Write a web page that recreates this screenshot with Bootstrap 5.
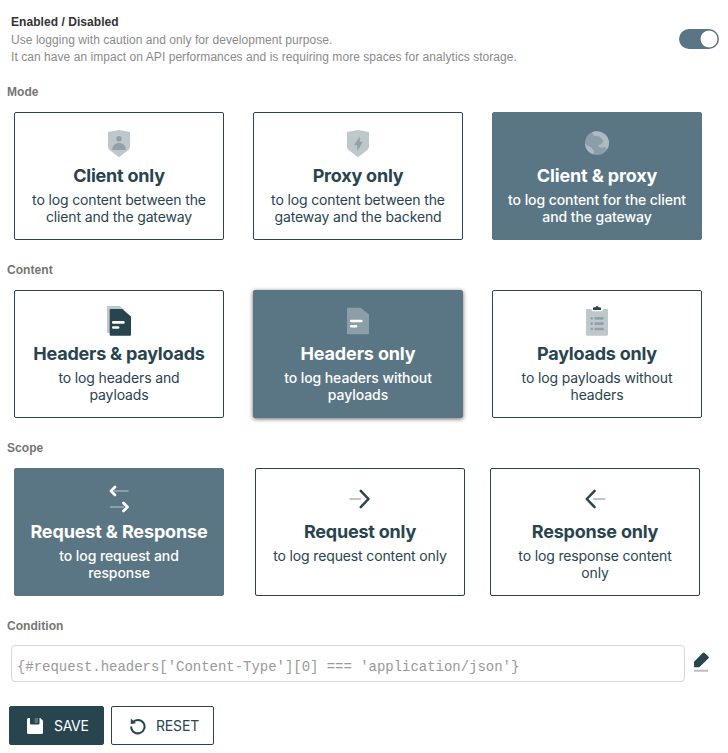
<!DOCTYPE html>
<html lang="en">
<head>
<meta charset="utf-8">
<meta name="viewport" content="width=device-width, initial-scale=1">
<title>Logging</title>
<link href="https://cdn.jsdelivr.net/npm/bootstrap@5.3.0/dist/css/bootstrap.min.css" rel="stylesheet">
<style>
  :root { --ink: #28444f; --slate: #5a7684; }
  body { font-family: "Liberation Sans", Arial, sans-serif; font-size: 12px; line-height: 17px; letter-spacing: .054px; color: #8a8a8a; height: 753px; overflow: hidden; }
  .intro { padding: 13px 9px 0 11px; height: 84px; }
  .intro-title { color: #333; line-height: 18px; margin-bottom: 1px; }
  .group-label { color: #757575; line-height: 17px; padding-left: 7px; margin-bottom: 11px; font-size: 12px; }
  .cond-label { margin-bottom: 10px; }
  .group-block { height: 178px; }
  .choices { padding-left: 14px; gap: 29px; }
  .choices-scope { gap: 31px; }
  .choices-scope .choice:last-child { margin-left: -6px; }
  .choice { width: 210px; height: 128px; flex: none; border: 1px solid var(--ink); border-radius: 2px; background: #fff; color: var(--ink); padding: 14px 13px 0; font-family: Inter, sans-serif; }
  .choice.picked { background: var(--slate); border-color: var(--slate); color: #fff; }
  .choice.raised { box-shadow: 0 1px 4px rgba(0,0,0,.6); }
  .choice svg { display: block; width: 32px; height: 32px; margin: 0 auto; }
  .choice-title { font-size: 18px; line-height: 22px; font-weight: 700; letter-spacing: -.22px; margin: 6px -8px 4px; white-space: nowrap; }
  .choice-text { font-size: 14px; line-height: 17px; letter-spacing: -.14px; }
  .picked .choice-title { letter-spacing: -.14px; }
  .picked .choice-text { font-weight: 500; letter-spacing: -.08px; }
  .toggle.form-check-input { width: 40px; height: 20px; margin: 16px 0 0; border: 0; box-shadow: none; border-radius: 10px; }
  .toggle.form-check-input:checked { background-color: var(--slate); background-image: radial-gradient(circle at 30px 10px, #fff 8px, transparent 8.8px); background-size: 40px 20px; background-position: 0 0; }
  .cond-row { padding-left: 11px; gap: 8px; }
  .cond-field.form-control { width: 674px; height: 37px; border: 1px solid #d6d6d6; border-radius: 4px; padding: 6px 5px 0; font: 14px/20px "Liberation Mono", "Courier New", monospace; letter-spacing: -.03px; }
  .cond-field::placeholder { color: #999; opacity: 1; }
  .cond-row svg { margin-top: -4px; }
  .actions { padding: 24px 0 0 9px; gap: 7px; }
  .act.btn { height: 39px; border: 1px solid var(--ink); border-radius: 2px; font: 14px/20px Inter, sans-serif; letter-spacing: -.3px; color: var(--ink); padding: 0 0 0 16px; gap: 10px; background: #fff; }
  .act.act-save { background: var(--ink); color: #fff; width: 95px; }
  .act.act-reset { width: 103px; padding-left: 17px; gap: 9px; letter-spacing: -.15px; }
</style>
</head>
<body class="bg-white">
<header class="intro d-flex justify-content-between">
  <div>
    <div class="intro-title fw-bold">Enabled / Disabled</div>
    <div>Use logging with caution and only for development purpose.</div>
    <div>It can have an impact on API performances and is requiring more spaces for analytics storage.</div>
  </div>
  <input class="form-check-input toggle" type="checkbox" role="switch" aria-label="Enable logging" checked>
</header>

<section class="group-block">
  <div class="group-label fw-bold">Mode</div>
  <div class="choices d-flex">
    <div class="choice text-center">
      <svg viewBox="0 0 32 32"><path fill="#bec8cb" d="M16 3 27 5v14.500q0 2-1.600 3.400L16 30.300l-9.400-7.400Q5 21.500 5 19.500V5z"/><circle cx="16" cy="11.800" r="2.800" fill="#92a1a7"/><path fill="#92a1a7" d="M9.300 23v-1.200c0-3.500 3.300-5.800 6.700-5.800s6.700 2.300 6.700 5.800V23z"/></svg>
      <div class="choice-title">Client only</div>
      <div class="choice-text">to log content between the client and the gateway</div>
    </div>
    <div class="choice text-center">
      <svg viewBox="0 0 32 32"><path fill="#bec8cb" d="M16 3 27 5v14.500q0 2-1.600 3.400L16 30.300l-9.400-7.400Q5 21.500 5 19.500V5z"/><path fill="#92a1a7" d="M17.800 9.600v5.200H21l-5.800 9.300v-5.900H12z"/></svg>
      <div class="choice-title">Proxy only</div>
      <div class="choice-text">to log content between the gateway and the backend</div>
    </div>
    <div class="choice picked text-center">
      <svg viewBox="0 0 32 32"><circle cx="16" cy="16" r="12" fill="#8c9ea8"/><path fill="#adbac1" d="M11 5.200C18 2.500 28 7 28 16c0 2.500-.8 4.500-2 6.300-1-.8-1.300-1.700-2.300-2.300-1.800.6-4.700 1-6-.5-.8-1.500.8-2.300 2.300-2 1.300-.4.500-1.700 1.500-2.300l1.300-1.200-2.400-2.300c-.5-1.700-2.200-2.500-4-2.600-2.600.2-4.600-1-5.400-3.900zM4 16.500c1 .2 1.500 1.200 2 2.200 2 .2 3.500.8 4.500 2.300 1 1.500 2.600 1.800 2.600 3.600 0 1.200-.8 1.800-1 2.600C7.500 25.500 4 21.500 4 16.500z"/></svg>
      <div class="choice-title">Client &amp; proxy</div>
      <div class="choice-text">to log content for the client and the gateway</div>
    </div>
  </div>
</section>

<section class="group-block">
  <div class="group-label fw-bold">Content</div>
  <div class="choices d-flex">
    <div class="choice text-center">
      <svg viewBox="0 0 32 32"><path fill="#bec8cb" d="M5 1h11.500l5 4L8 28H5q-1 0-1-1V2q0-1 1-1z"/><path fill="#28444f" d="M7.700 4h11.600L28 11.500v18.200q0 1-1 1H7.700q-1 0-1-1V5q0-1 1-1z"/><path stroke="#fff" stroke-width="2.700" stroke-linecap="round" d="M10.300 17.400h10.100M10.300 22.500h4.800"/></svg>
      <div class="choice-title">Headers &amp; payloads</div>
      <div class="choice-text">to log headers and payloads</div>
    </div>
    <div class="choice picked raised text-center">
      <svg viewBox="0 0 32 32"><path fill="#8c9ea8" d="M6 2.700h12.500L27 9.500v18.800q0 1-1 1H6q-1 0-1-1V3.700q0-1 1-1z"/><path stroke="#fff" stroke-width="2.600" stroke-linecap="round" d="M9.300 16h10M9.300 21.300h4.800"/></svg>
      <div class="choice-title">Headers only</div>
      <div class="choice-text">to log headers without payloads</div>
    </div>
    <div class="choice text-center">
      <svg viewBox="0 0 32 32"><path fill="#bec8cb" d="M6.300 4h4.200v1q0 1.300 1.300 1.300h8.700q1.300 0 1.300-1.300V4h3.900Q27 4 27 5.300v24q0 1.400-1.300 1.400H6.300Q5 30.700 5 29.300v-24Q5 4 6.300 4z"/><path fill="#28444f" d="M13 2.300h1.700q.2-1.300 1.300-1.300t1.300 1.300H19q1 0 1 1V5h-8V3.300q0-1 1-1z"/><g stroke="#92a1a7" stroke-width="2.700" stroke-linecap="round"><path d="M14.800 13.300h6.800M14.800 18.700h6.800M14.800 24h6.800M10.700 13.300h0M10.700 18.700h0M10.700 24h0"/></g></svg>
      <div class="choice-title">Payloads only</div>
      <div class="choice-text">to log payloads without headers</div>
    </div>
  </div>
</section>

<section class="group-block">
  <div class="group-label fw-bold">Scope</div>
  <div class="choices choices-scope d-flex">
    <div class="choice picked text-center">
      <svg viewBox="0 0 32 32" fill="none" stroke-width="2.700"><path stroke="#8c9ea8" stroke-width="2" d="M11 8h14.500M7 24h14"/><path stroke="#fff" stroke-linecap="round" stroke-linejoin="round" d="m12 4-4 4 4 4M20.500 20l4 4-4 4"/></svg>
      <div class="choice-title">Request &amp; Response</div>
      <div class="choice-text px-2">to log request and response</div>
    </div>
    <div class="choice text-center">
      <svg viewBox="0 0 32 32" fill="none" stroke-width="2.500" stroke-linecap="round" stroke-linejoin="round"><path stroke="#bec8cb" stroke-width="2" d="M6.300 16h10"/><path stroke="#28444f" d="m16.700 7.800 7.800 8.200-7.800 8.200"/></svg>
      <div class="choice-title">Request only</div>
      <div class="choice-text">to log request content only</div>
    </div>
    <div class="choice text-center">
      <svg viewBox="0 0 32 32" fill="none" stroke-width="2.500" stroke-linecap="round" stroke-linejoin="round"><path stroke="#bec8cb" stroke-width="2" d="M15 16h10.700"/><path stroke="#28444f" d="M15.600 7.800 7.800 16l7.800 8.200"/></svg>
      <div class="choice-title">Response only</div>
      <div class="choice-text">to log response content only</div>
    </div>
  </div>
</section>

<section>
  <div class="group-label cond-label fw-bold">Condition</div>
  <div class="cond-row d-flex align-items-center">
    <input class="form-control cond-field" type="text" placeholder="{#request.headers['Content-Type'][0] === 'application/json'}">
    <svg width="18" height="22" viewBox="0 0 18 22"><path fill="#28444f" d="M1 10.800 9.700 2q1-1 2 0L15.500 5.700q.8.800 0 1.600L6.300 16.300H1z"/><path fill="#bbb" d="M1 18.700h14v2H1z"/></svg>
  </div>
</section>

<div class="actions d-flex">
  <button class="btn act act-save d-flex align-items-center" type="button">
    <svg width="18" height="18" viewBox="0 0 18 18"><path fill="#fff" d="M2.500 1H4v5.500q0 1 1 1h7.500q1 0 1-1V1h.8L17 3.700v11.800q0 1.500-1.500 1.500h-13Q1 17 1 15.500v-13Q1 1 2.500 1z"/><path fill="#5d717a" d="M8.700 1H12v5H8.700z"/></svg>SAVE
  </button>
  <button class="btn act act-reset d-flex align-items-center" type="button">
    <svg width="18" height="18" viewBox="0 0 18 18"><path fill="none" stroke="#28444f" stroke-width="2" stroke-linecap="round" d="M3.600 5.500A6.700 6.700 0 1 1 2.200 10.300"/><path fill="#28444f" d="M1.800 1.500 7 6.300l-5.200.6z"/></svg>RESET
  </button>
</div>
<script src="https://cdn.jsdelivr.net/npm/bootstrap@5.3.0/dist/js/bootstrap.bundle.min.js"></script>
</body>
</html>
